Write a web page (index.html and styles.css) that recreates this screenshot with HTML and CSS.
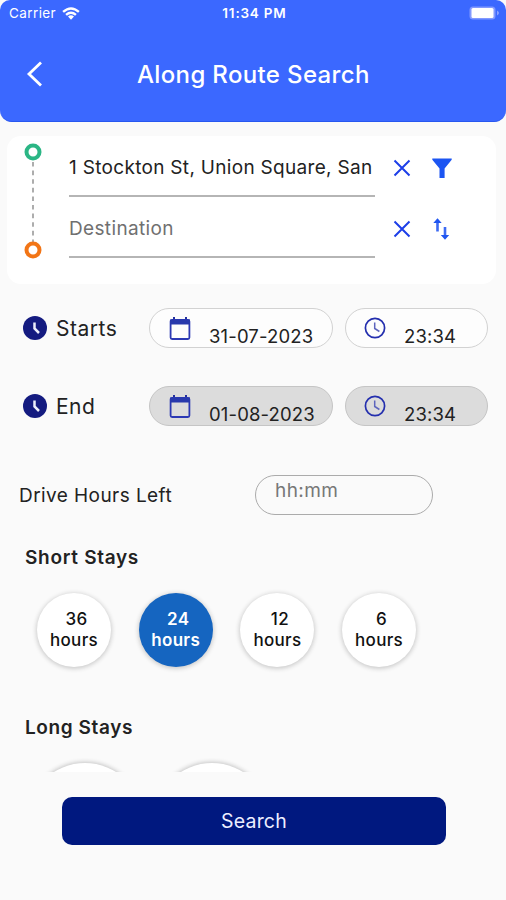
FILE: index.html
```html
<!DOCTYPE html>
<html lang="en">
<head>
<meta charset="utf-8">
<title>Along Route Search</title>
<link rel="stylesheet" href="styles.css">
</head>
<body>
<svg class="defs" aria-hidden="true">
  <symbol id="cross" viewBox="0 0 18 18"><path d="M1.500 1.500l15 15M16.500 1.500l-15 15" fill="none" stroke="#1d3fe8" stroke-width="2"/></symbol>
  <symbol id="clock-solid" viewBox="0 0 24 24"><circle cx="12" cy="12" r="12" fill="#141b80"/><path d="M11.500 6.500v6l4.500 4.500" fill="none" stroke="#eceefa" stroke-width="2.500"/></symbol>
  <symbol id="calendar" viewBox="0 0 22 24"><path d="M5 0v4M17 0v4" stroke="#2430a0" stroke-width="2"/><rect x="1.600" y="3" width="18.800" height="19" rx="1.500" fill="none" stroke="#2c39b4" stroke-width="1.800"/><path d="M1 2.500h20v5H1z" fill="#2839ac"/></symbol>
  <symbol id="clock" viewBox="0 0 22 22"><circle cx="11" cy="11" r="9.600" fill="none" stroke="#242fae" stroke-width="1.700"/><path d="M10.700 5.500v6l4.700 3" fill="none" stroke="#5d65bd" stroke-width="1.500"/></symbol>
</svg>
<header class="header">
  <div class="status">
    <div class="carrier"><span>Carrier</span>
      <svg class="wifi" viewBox="0 0 19 14"><g fill="none" stroke="#fff" stroke-width="2.600"><path d="M1 5.200Q9.500-2.200 18 5.200"/><path d="M4.200 8.500Q9.500 3.900 14.800 8.500"/></g><path d="M6.300 10.200Q9.500 7.600 12.700 10.200L9.500 13.600z" fill="#fff"/></svg>
    </div>
    <span class="time">11:34 PM</span>
    <svg class="battery" viewBox="0 0 31 14"><rect x=".5" y=".5" width="26" height="13" rx="3.500" fill="#8299ff"/><rect x="2.500" y="2" width="22" height="10" rx="1.500" fill="#fff"/><path d="M28 4.500q4 2.500 0 5z" fill="#8ca1ff"/></svg>
  </div>
  <div class="titlebar">
    <svg class="back" viewBox="0 0 16 26"><path d="M14 1.500L2 13l12 11.500" fill="none" stroke="#fff" stroke-width="2.800"/></svg>
    <h1 class="title">Along Route Search</h1>
  </div>
</header>
<main>
  <section class="route">
    <svg class="rail" viewBox="0 0 18 116"><path d="M9 19v80" stroke="#999" stroke-width="1.600" stroke-dasharray="4.600 4"/><circle cx="9" cy="9" r="6.500" fill="#fff" stroke="#2bb685" stroke-width="4"/><circle cx="9" cy="107" r="6.500" fill="#fff" stroke="#f27516" stroke-width="4"/></svg>
    <div class="stops">
      <div class="stop"><div class="field"><span class="origin">1 Stockton St, Union Square, San</span></div>
        <svg class="cross"><use href="#cross"/></svg>
        <svg class="action" viewBox="0 0 20 20"><path d="M.3.500h19.400v1.300l-7.100 8.700V20H7.500v-9.500L.3 1.800z" fill="#1c55f2"/></svg></div>
      <div class="stop"><div class="field"><span class="destination">Destination</span></div>
        <svg class="cross"><use href="#cross"/></svg>
        <svg class="action" viewBox="0 0 20 20"><path d="M5.500 12.500V2M13 8v10" stroke="#3c6af3" stroke-width="2.600"/><path d="M1.300 4L5.500-.7 9.700 4zM8.800 16l4.200 4.700 4.200-4.700z" fill="#1f55f0"/></svg></div>
    </div>
  </section>
  <section class="when">
    <svg class="mark"><use href="#clock-solid"/></svg><span class="label starts">Starts</span>
    <div class="pill date"><svg class="cal"><use href="#calendar"/></svg><span>31-07-2023</span></div>
    <div class="pill hour"><svg class="clk"><use href="#clock"/></svg><span>23:34</span></div>
  </section>
  <section class="when end">
    <svg class="mark"><use href="#clock-solid"/></svg><span class="label">End</span>
    <div class="pill date"><svg class="cal"><use href="#calendar"/></svg><span>01-08-2023</span></div>
    <div class="pill hour"><svg class="clk"><use href="#clock"/></svg><span>23:34</span></div>
  </section>
  <section class="drive"><span class="drive-label">Drive Hours Left</span><div class="drive-input"><span>hh:mm</span></div></section>
  <h2 class="heading">Short Stays</h2>
  <div class="short">
    <div class="stay"><span>36</span><span>hours</span></div>
    <div class="stay selected"><span>24</span><span>hours</span></div>
    <div class="stay"><span>12</span><span>hours</span></div>
    <div class="stay"><span>6</span><span>hours</span></div>
  </div>
  <h2 class="heading long-heading">Long Stays</h2>
  <div class="long"><div class="long-stay"></div><div class="long-stay"></div></div>
</main>
<div class="search">Search</div>
</body>
</html>
```
FILE: styles.css
```css
* { box-sizing: border-box; }
body { margin: 0; width: 506px; height: 900px; overflow: hidden; background: #fafafa; color: #222; font-family: Inter, "Liberation Sans", sans-serif; white-space: nowrap; }
svg { display: block; flex: none; overflow: visible; }
h1, h2 { margin: 0; }
.defs { display: none; }
.header { height: 122px; border-radius: 10px 10px 12px 12px; background: #3b68ff; color: #fff; border-bottom: 1px solid #2857f0; }
.status { display: grid; grid-template-columns: 1fr auto 1fr; align-items: center; height: 26px; padding: 0 6px 0 9px; font-size: 13.5px; }
.carrier { display: flex; align-items: center; gap: 6px; letter-spacing: .4px; }
.wifi { width: 18px; height: 13px; }
.time { font-weight: 600; font-size: 13.500px; letter-spacing: .8px; }
.battery { width: 31px; height: 14px; justify-self: end; }
.titlebar { display: flex; align-items: center; height: 96px; padding-left: 27px; }
.back { width: 16px; height: 26px; }
.title { margin-left: 94px; font-size: 24px; font-weight: 500; letter-spacing: .35px; }
.route { display: flex; width: 489px; height: 148px; margin: 14px 0 0 7px; padding-left: 17px; border-radius: 14px; background: #fff; }
.rail { width: 18px; height: 116px; margin-top: 7px; }
.stops { margin-left: 27px; }
.stop { display: flex; align-items: center; height: 61px; padding-top: 3px; }
.field { width: 306px; height: 58px; display: flex; align-items: center; border-bottom: 2px solid #b5b5b5; font-size: 19px; }
.origin { letter-spacing: .31px; }
.destination { color: #707070; letter-spacing: .35px; }
.cross { width: 18px; height: 18px; margin-left: 18px; }
.action { width: 20px; height: 20px; margin-left: 21px; }
.when { display: flex; align-items: center; height: 40px; margin: 24px 0 0 23px; }
.when.end { margin-top: 38px; }
.mark { width: 24px; height: 24px; }
.label { width: 94px; margin-left: 9px; font-size: 21px; letter-spacing: .5px; }
.pill { display: flex; height: 40px; border: 1px solid #d2d2d2; border-radius: 20px; background: #fdfdfd; font-size: 18.500px; letter-spacing: .15px; }
.end .pill { background: #dcdcdc; border-color: #c5c5c5; }
.date { width: 184px; margin-left: -1px; padding-left: 19px; }
.hour { width: 143px; margin-left: 12px; padding-left: 18px; }
.cal { width: 22px; height: 24px; margin-top: 8px; }
.clk { width: 22px; height: 22px; margin-top: 8px; }
.pill span { height: 22px; line-height: 22px; margin: 16px 0 0 18px; }
.drive { display: flex; align-items: center; height: 40px; margin: 49px 0 0 19px; font-size: 19px; letter-spacing: .43px; }
.drive-label { width: 236px; }
.drive-input { width: 178px; height: 40px; border: 1px solid #ababab; border-radius: 20px; padding: 3px 0 0 19px; line-height: 24px; color: #777; }
.heading { margin: 31px 0 0 25px; font-size: 19px; line-height: 24px; font-weight: 600; letter-spacing: .7px; }
.short { display: flex; gap: 27.700px; margin: 23px 0 0 37px; }
.stay { display: flex; flex-direction: column; align-items: center; width: 74px; height: 74px; padding-top: 16px; border-radius: 50%; background: #fff; box-shadow: 0 1px 4px 1px #ccc; font-size: 17px; line-height: 20.500px; font-weight: 500; letter-spacing: .3px; color: #111; }
.stay span:first-child { padding-left: 5px; }
.stay.selected { background: #1565c0; color: #fff; font-weight: 600; }
.long-heading { margin-top: 49px; letter-spacing: .6px; }
.long { display: flex; gap: 11px; height: 17px; margin: 15px 0 0 27px; padding-top: 8px; overflow: hidden; }
.long-stay { flex: none; width: 116px; height: 116px; border-radius: 50%; background: #fff; box-shadow: 0 0 4px 1px #c4c4c4; }
.search { width: 384px; height: 48px; margin: 25px 0 0 62px; border-radius: 10px; background: #00187f; color: #eceeff; font-size: 19.500px; line-height: 48px; text-align: center; letter-spacing: .2px; }
```
